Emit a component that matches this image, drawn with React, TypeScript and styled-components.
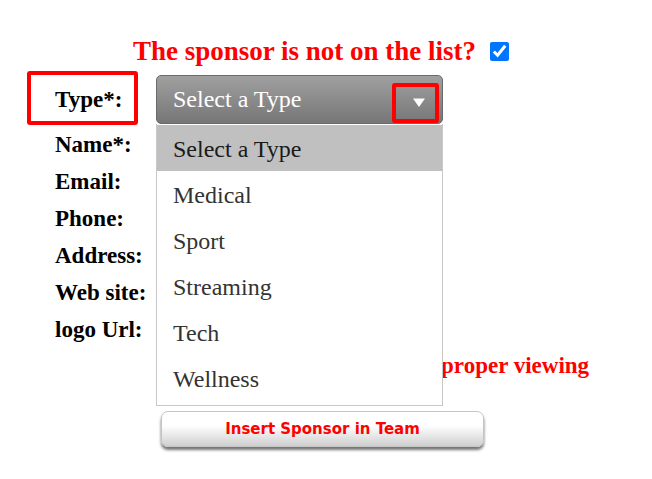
import styled, { createGlobalStyle, css } from "styled-components";

const GlobalStyle = createGlobalStyle`
  html, body {
    margin: 0;
    padding: 0;
    background: #ffffff;
    font-family: "Liberation Serif", "Times New Roman", serif;
  }
`;

const sponsorTypes = ["Select a Type", "Medical", "Sport", "Streaming", "Tech", "Wellness"];
const otherFields = ["Name*:", "Email:", "Phone:", "Address:", "Web site:", "logo Url:"];

const App = () => {
  return (
    <StyledPage>
      <GlobalStyle />
      <StyledHeader>
        <h2>The sponsor is not on the list?</h2>
        <StyledCheck type="checkbox" defaultChecked />
      </StyledHeader>

      <StyledForm>
        <StyledLabel $marked>Type*:</StyledLabel>
        <StyledSelectWrap>
          <StyledSelect>
            <span>Select a Type</span>
            <StyledArrow>
              <svg width="12" height="9" viewBox="0 0 12 9">
                <path d="M0 0.5 H12 L6 9 Z" fill="#ffffff" />
              </svg>
            </StyledArrow>
          </StyledSelect>
          <StyledOptions>
            {sponsorTypes.map((t, i) => (
              <StyledOption key={t} $active={i === 0}>
                {t}
              </StyledOption>
            ))}
          </StyledOptions>
        </StyledSelectWrap>

        {otherFields.map((f) => (
          <StyledRow key={f}>
            <StyledLabel>{f}</StyledLabel>
            <StyledInput type="text" />
          </StyledRow>
        ))}

        <StyledNotice>Please rotate your screen for proper viewing</StyledNotice>
        <StyledButton type="button">Insert Sponsor in Team</StyledButton>
      </StyledForm>
    </StyledPage>
  );
};

const StyledPage = styled.main`
  width: 652px;
  min-height: 479px;
  padding-top: 35px;
  box-sizing: border-box;
`;

const StyledHeader = styled.header`
  display: flex;
  align-items: center;
  justify-content: center;
  padding-right: 10px;
  h2 {
    margin: 0;
    font-size: 27px;
    line-height: 32px;
    font-weight: bold;
    color: #ff0000;
  }
`;

const StyledCheck = styled.input`
  width: 19px;
  height: 19px;
  margin: 0 0 0 14px;
  accent-color: #0075ff;
`;

const StyledForm = styled.section`
  display: grid;
  grid-template-columns: 101px 287px;
  grid-template-rows: 51px repeat(6, 37px) 36px auto;
  margin: 8px 0 0 55px;
`;

const StyledRow = styled.div`
  display: contents;
`;

const StyledLabel = styled.label<{ $marked?: boolean }>`
  position: relative;
  display: flex;
  align-items: center;
  font-size: 23px;
  font-weight: bold;
  color: #000000;
  white-space: nowrap;
  ${({ $marked }) =>
    $marked &&
    css`
      align-self: start;
      height: 49px;
      &::after {
        content: "";
        position: absolute;
        left: -28px;
        top: -4px;
        width: 111px;
        height: 54px;
        box-sizing: border-box;
        border: 4px solid #ff0000;
        border-radius: 3px;
      }
    `}
`;

const StyledSelectWrap = styled.div`
  position: relative;
  align-self: start;
`;

const StyledSelect = styled.div`
  display: flex;
  align-items: center;
  justify-content: space-between;
  box-sizing: border-box;
  height: 49px;
  padding: 0 3px 0 16px;
  border: 1px solid #6a6a6a;
  border-radius: 5px;
  background: linear-gradient(#a0a0a0, #767676);
  color: #ffffff;
  font-size: 24px;
`;

const StyledArrow = styled.div`
  display: flex;
  align-items: center;
  justify-content: center;
  box-sizing: border-box;
  width: 47px;
  height: 40px;
  margin-top: 6px;
  padding-left: 7px;
  border: 4px solid #ff0000;
  border-radius: 3px;
`;

const StyledOptions = styled.ul`
  position: absolute;
  top: 100%;
  left: 0;
  z-index: 10;
  box-sizing: border-box;
  width: 287px;
  margin: 0;
  padding: 1px 0 4px;
  list-style: none;
  background: #ffffff;
  border: 1px solid #c8c8c8;
  border-top: none;
`;

const StyledOption = styled.li<{ $active?: boolean }>`
  display: flex;
  align-items: center;
  box-sizing: border-box;
  height: 46px;
  padding: 2px 0 0 16px;
  font-size: 24px;
  color: ${({ $active }) => ($active ? "#1a1a1a" : "#333333")};
  background: ${({ $active }) => ($active ? "#c0c0c0" : "transparent")};
`;

const StyledInput = styled.input`
  align-self: center;
  box-sizing: border-box;
  width: 100%;
  height: 30px;
  border: 1px solid #aaaaaa;
`;

const StyledNotice = styled.p`
  grid-column: 2;
  align-self: center;
  margin: 0;
  font-size: 23px;
  font-weight: bold;
  color: #ff0000;
  white-space: nowrap;
`;

const StyledButton = styled.button`
  grid-column: 2;
  justify-self: start;
  width: 323px;
  height: 36px;
  margin: 27px 0 0 5px;
  border: 1px solid #c4c4c4;
  border-radius: 7px;
  background: linear-gradient(#ffffff 0%, #ffffff 40%, #cfcfcf 100%);
  box-shadow: 0 3px 3px rgba(0, 0, 0, 0.55);
  font-family: "DejaVu Sans", Verdana, sans-serif;
  font-size: 15px;
  font-weight: bold;
  color: #ff0000;
  cursor: pointer;
`;

export default App;
